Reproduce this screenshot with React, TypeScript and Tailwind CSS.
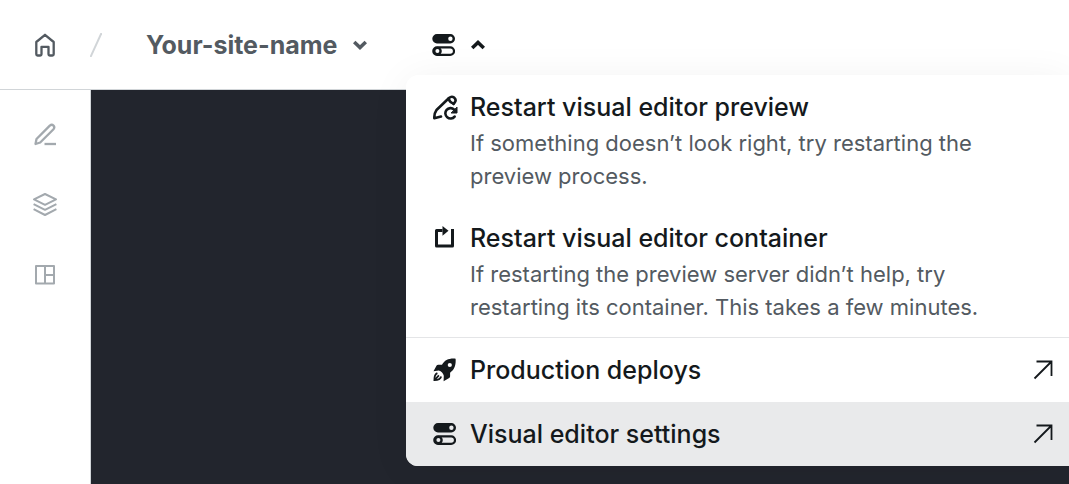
import React from 'react';

interface IconProps {
  className?: string;
}

/** Two stacked switches, the upper one on and the lower one off */
const TogglesIcon: React.FC<IconProps> = ({ className }) => (
  <svg className={className} viewBox="0 0 24 24" fill="none" aria-hidden="true">
    <path
      fill="currentColor"
      fillRule="evenodd"
      d="M6 1h13.300a4.700 4.700 0 0 1 0 9.400H6A4.700 4.700 0 0 1 6 1Zm13.400 2.500a2.200 2.200 0 1 0 0 4.400 2.200 2.200 0 0 0 0-4.400Z"
    />
    <rect x="2.300" y="14.300" width="20.700" height="7.600" rx="3.800" stroke="currentColor" strokeWidth="2.200" />
    <circle cx="6.400" cy="18.100" r="3.200" stroke="currentColor" strokeWidth="2.400" />
  </svg>
);

const HomeIcon: React.FC<IconProps> = ({ className }) => (
  <svg className={className} viewBox="0 0 24 24" fill="none" stroke="currentColor" strokeWidth="2.300" strokeLinejoin="round" aria-hidden="true">
    <path d="M12 1.800 20.700 9v12.200q0 1.300-1.300 1.300h-2.600q-1.300 0-1.300-1.300v-7.400h-7v7.400q0 1.300-1.300 1.300H4.600q-1.300 0-1.300-1.300V9Z" />
  </svg>
);

const PencilIcon: React.FC<IconProps> = ({ className }) => (
  <svg className={className} viewBox="0 0 24 24" fill="none" stroke="currentColor" strokeWidth="2.300" strokeLinejoin="round" aria-hidden="true">
    <path d="M2.500 22 3.500 17 16.800 3.600q2-1.600 3.700 0 1.600 1.800 0 3.600L7.200 20.500Z" />
    <path d="M11.500 22H23" />
  </svg>
);

const LayersIcon: React.FC<IconProps> = ({ className }) => (
  <svg className={className} viewBox="0 0 24 24" fill="none" stroke="currentColor" strokeWidth="2" strokeLinejoin="round" aria-hidden="true">
    <path d="m12 2 11 5.400-11 5.400L1 7.400Z" />
    <path d="m.6 12.200 11.400 5.600 11.400-5.600" />
    <path d="m.6 17.200 11.400 5.800 11.400-5.800" />
  </svg>
);

const LayoutIcon: React.FC<IconProps> = ({ className }) => (
  <svg className={className} viewBox="0 0 24 24" fill="none" stroke="currentColor" strokeWidth="2" strokeLinejoin="round" aria-hidden="true">
    <path d="M3 4h18v17.500H3ZM12 4v17.500M12 13h9" />
  </svg>
);

/** Pencil outline with a clockwise arrow over its lower right corner */
const PencilRestartIcon: React.FC<IconProps> = ({ className }) => (
  <svg className={className} viewBox="0 0 26 26" fill="none" stroke="currentColor" strokeWidth="2.600" strokeLinejoin="round" strokeLinecap="round" aria-hidden="true">
    <path d="M9 22.600 2.300 24.200q-.3-4.600 2.200-8.200L17 4q2.600-2.200 5.200-.400 2.600 2.600.4 5L21.500 10" />
    <path d="M16.800 4.400q.4 3.800 4.800 5.200" />
    <path d="M22.600 22.600a5.200 5.200 0 1 1-.6-7.200" />
    <path d="M25 13.500v5.500h-5.500Z" fill="currentColor" strokeWidth="1" />
  </svg>
);

const ContainerRestartIcon: React.FC<IconProps> = ({ className }) => (
  <svg className={className} viewBox="0 0 24 24" fill="none" stroke="currentColor" strokeWidth="3" aria-hidden="true">
    <path d="M10.500 4.500h-6v15.500h16V3" strokeLinejoin="round" />
    <path d="M10.500 0 16.500 4.800l-6 5Z" fill="currentColor" stroke="none" />
  </svg>
);

const RocketIcon: React.FC<IconProps> = ({ className }) => (
  <svg className={className} viewBox="0 0 24 24" fill="none" aria-hidden="true">
    <path
      fill="currentColor"
      fillRule="evenodd"
      d="M23.600.700c-7-.5-10.800 1.500-13.600 6H6.200q-1 0-1.600.9L1.500 13.200l5.300-.8q4 1.300 5 5.400L11.600 23.300l5.600-3.400q.9-.6.9-1.600v-3.500C22.300 11.600 24.100 7.500 23.600.700ZM17.800 4.900a2.100 2.100 0 1 1 0 4.200 2.100 2.100 0 0 1 0-4.200Z"
    />
    <path
      stroke="currentColor"
      strokeWidth="1.800"
      d="M5.400 15.200c-2.400 1-3.100 3.500-3 7 3.300 0 6-.8 6.800-3.600M3.500 21l3.400-3.700"
    />
  </svg>
);

const ArrowUpRightIcon: React.FC<IconProps> = ({ className }) => (
  <svg className={className} viewBox="0 0 20 20" fill="none" stroke="currentColor" strokeWidth="1.800" aria-hidden="true">
    <path d="M3.500 1.500h15v14.500M18.500 1.500 1.500 18.500" />
  </svg>
);

const ChevronIcon: React.FC<IconProps> = ({ className }) => (
  <svg className={className} viewBox="0 0 14 14" fill="none" stroke="currentColor" strokeWidth="3.600" aria-hidden="true">
    <path d="m1.200 4 5.800 5.500L12.800 4" />
  </svg>
);

interface RestartAction {
  title: string;
  desc: string;
  icon: React.ReactNode;
}

const RESTART_ACTIONS: RestartAction[] = [
  {
    title: 'Restart visual editor preview',
    desc: 'If something doesn’t look right, try restarting the preview process.',
    icon: <PencilRestartIcon className="w-[26px] h-[26px]" />,
  },
  {
    title: 'Restart visual editor container',
    desc: 'If restarting the preview server didn’t help, try restarting its container. This takes a few minutes.',
    icon: <ContainerRestartIcon className="w-6 h-6" />,
  },
];

const SIDE_ITEMS = [
  { label: 'Edit', icon: <PencilIcon className="w-6 h-6" /> },
  { label: 'Content', icon: <LayersIcon className="w-6 h-6" /> },
  { label: 'Layout', icon: <LayoutIcon className="w-6 h-6" /> },
];

/** Menu that hangs over the canvas below the toggles button */
const EditorMenu: React.FC = () => (
  <div className="absolute top-[75px] left-[406px] right-0 z-10 overflow-hidden rounded-l-xl bg-white text-[#14191c] shadow-[0_4px_40px_rgba(0,0,0,0.06)]">
    <div className="border-b border-[#e4e5e7]">
      {RESTART_ACTIONS.map((action) => (
        <button key={action.title} className="flex w-full items-start pl-[26px] pr-4 pt-4 pb-[13px] text-left">
          <span className="flex h-8 w-[38px] shrink-0 items-center">{action.icon}</span>
          <span className="block max-w-[530px]">
            <span className="block text-[25px] leading-8 font-medium">{action.title}</span>
            <span className="mt-1 block text-[22px] leading-[33px] text-[#535a61]">{action.desc}</span>
          </span>
        </button>
      ))}
    </div>
    <a href="#deploys" className="flex h-16 items-center pl-[26px] pr-4">
      <span className="w-[38px] shrink-0"><RocketIcon className="w-6 h-6" /></span>
      <span className="flex-1 text-[25px] leading-8 font-medium">Production deploys</span>
      <ArrowUpRightIcon className="w-5 h-5" />
    </a>
    <a href="#settings" className="flex h-16 items-center bg-[#e9eaeb] pl-[26px] pr-4">
      <span className="w-[38px] shrink-0"><TogglesIcon className="w-6 h-6" /></span>
      <span className="flex-1 text-[25px] leading-8 font-medium">Visual editor settings</span>
      <ArrowUpRightIcon className="w-5 h-5" />
    </a>
  </div>
);

const App: React.FC = () => (
  <div className="relative flex min-h-screen flex-col overflow-hidden bg-white font-['Inter','Liberation_Sans',sans-serif]">
    <header className="flex h-[90px] items-center border-b border-[#d1d5d8] pl-[33px] text-[#535a61]">
      <a href="#home" aria-label="Home"><HomeIcon className="w-6 h-6" /></a>
      <svg className="ml-[33px] h-6 w-3 text-[#d1d5d8]" viewBox="0 0 12 24" stroke="currentColor" strokeWidth="2" aria-hidden="true">
        <path d="M11.500 0 .5 24" />
      </svg>
      <button className="ml-11 flex items-center gap-4 text-[25px] leading-8 font-bold">
        Your-site-name
        <ChevronIcon className="h-[14px] w-[14px]" />
      </button>
      <button aria-label="Editor menu" aria-expanded="true" className="ml-16 flex items-center gap-4 text-[#14191c]">
        <TogglesIcon className="w-6 h-6" />
        <ChevronIcon className="h-[14px] w-[14px] rotate-180" />
      </button>
    </header>
    <div className="flex flex-1">
      <nav className="flex w-[91px] flex-col items-center gap-[46px] border-r border-[#d1d5d8] pt-8 text-[#a3a9ae]">
        {SIDE_ITEMS.map((item) => (
          <button key={item.label} aria-label={item.label}>{item.icon}</button>
        ))}
      </nav>
      <main className="flex-1 bg-[#22252d]" />
    </div>
    <EditorMenu />
  </div>
);

export default App;
